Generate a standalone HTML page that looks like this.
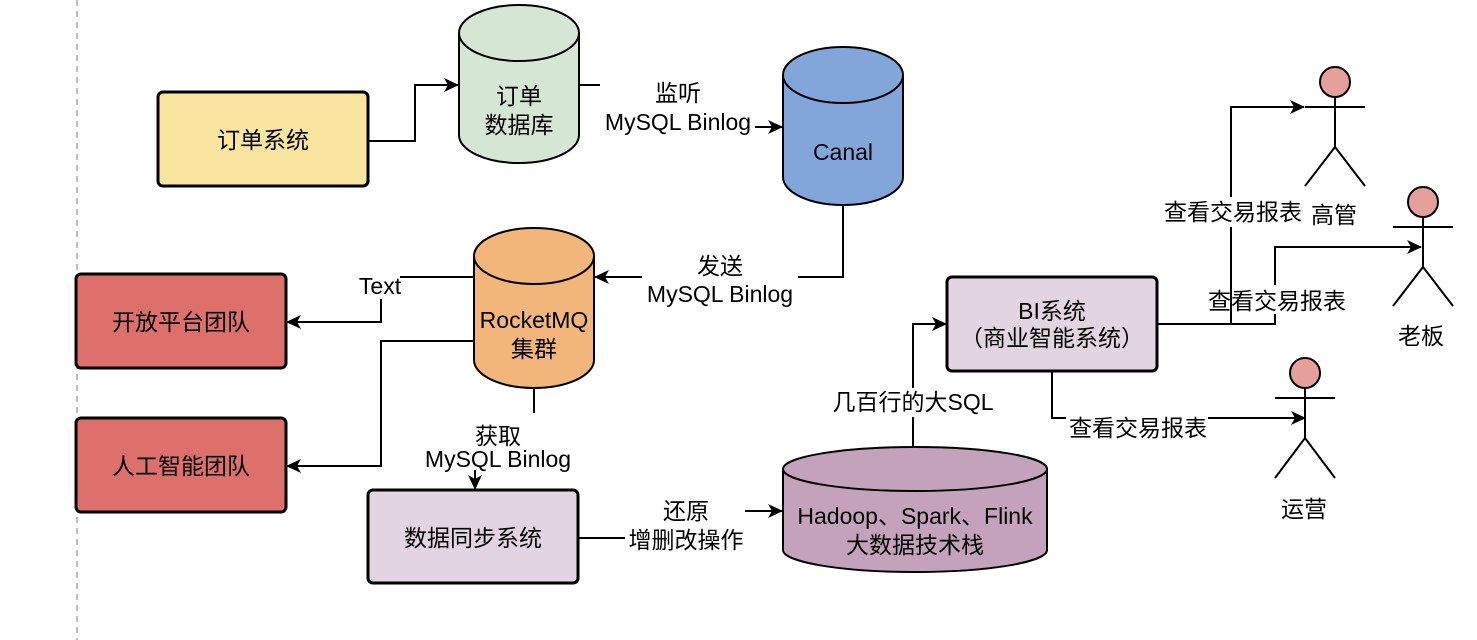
<!DOCTYPE html>
<html><head><meta charset="utf-8"><style>
html,body{margin:0;padding:0;background:#fff;width:1477px;height:640px;overflow:hidden}
text{font-family:"Liberation Sans","Noto Sans CJK SC",sans-serif;font-size:23px;fill:#000;text-anchor:middle}
</style></head><body>
<svg width="1477" height="640" viewBox="0 0 1477 640" xmlns="http://www.w3.org/2000/svg">
<defs><marker id="a" markerWidth="16" markerHeight="14" refX="14" refY="7" orient="auto" markerUnits="userSpaceOnUse"><path d="M0,0 L15,7 L0,14 L4,7 Z" fill="#000"/></marker></defs>
<line x1="77" y1="0" x2="77" y2="640" stroke="#bbb" stroke-width="2" stroke-dasharray="6,5"/>
<g fill="none" stroke="#000" stroke-width="2">
<path d="M368,141 H415 V85 H458" marker-end="url(#a)"/>
<path d="M579,85 H600"/>
<path d="M755,127 H782" marker-end="url(#a)"/>
<path d="M843,205 V277 H798"/>
<path d="M642,277 H595" marker-end="url(#a)"/>
<path d="M474,277 H400"/>
<path d="M381,299 V322 H287" marker-end="url(#a)"/>
<path d="M474,341 H381 V466 H287" marker-end="url(#a)"/>
<path d="M534,388 V413"/>
<path d="M475,470 V489" marker-end="url(#a)"/>
<path d="M578,538 H625"/>
<path d="M745,511 H782" marker-end="url(#a)"/>
<path d="M913,447 V417"/>
<path d="M913,388 V324 H946" marker-end="url(#a)"/>
<path d="M1157,324 H1231 V227"/>
<path d="M1231,197 V107 H1304" marker-end="url(#a)"/>
<path d="M1231,324 H1275 V314"/>
<path d="M1275,285 V247 H1421" marker-end="url(#a)"/>
<path d="M1052,371 V418 H1066"/>
<path d="M1208,418 H1305" marker-end="url(#a)"/>
</g>
<g stroke="#000" stroke-width="3">
<rect x="158" y="92" width="210" height="94" rx="5" fill="#f9e4a0"/>
<rect x="76" y="274" width="210" height="94" rx="5" fill="#de706b"/>
<rect x="76" y="418" width="210" height="94" rx="5" fill="#de706b"/>
<rect x="368" y="490" width="210" height="93" rx="5" fill="#e2d4e0"/>
<rect x="947" y="277" width="210" height="94" rx="5" fill="#e2d4e0"/>
</g>
<g stroke="#000" stroke-width="2">
<path d="M459,33 V135 A60,28 0 0 0 579,135 V33 A60,28 0 0 0 459,33 Z" fill="#d6e6d4"/><path d="M459,33 A60,28 0 0 0 579,33" fill="none"/>
<path d="M783,75 V177 A60,28 0 0 0 903,177 V75 A60,28 0 0 0 783,75 Z" fill="#82a6da"/><path d="M783,75 A60,28 0 0 0 903,75" fill="none"/>
<path d="M474,256 V360 A60,28 0 0 0 594,360 V256 A60,28 0 0 0 474,256 Z" fill="#f3b67a"/><path d="M474,256 A60,28 0 0 0 594,256" fill="none"/>
<path d="M783,469 V550 A132,22 0 0 0 1047,550 V469 A132,22 0 0 0 783,469 Z" fill="#c5a2bb"/><path d="M783,469 A132,22 0 0 0 1047,469" fill="none"/>
<g fill="#e6a09c"><circle cx="1335" cy="82" r="15"/><circle cx="1423" cy="202" r="15"/><circle cx="1305" cy="373" r="15"/></g>
<path d="M1305,107 H1365 M1335,97 V147 L1305,186 M1335,147 L1365,186" fill="none"/>
<path d="M1393,227 H1453 M1423,217 V267 L1393,306 M1423,267 L1453,306" fill="none"/>
<path d="M1275,398 H1335 M1305,388 V438 L1275,478 M1305,438 L1335,478" fill="none"/>
</g>
<text x="263" y="148">订单系统</text>
<text x="519" y="104">订单</text><text x="519" y="133">数据库</text>
<text x="843" y="160">Canal</text>
<text x="534" y="328">RocketMQ</text><text x="534" y="357">集群</text>
<text x="181" y="330">开放平台团队</text>
<text x="181" y="474">人工智能团队</text>
<text x="473" y="546">数据同步系统</text>
<text x="1052" y="319">BI系统</text><text x="1052" y="346">（商业智能系统）</text>
<text x="915" y="524">Hadoop、Spark、Flink</text><text x="915" y="553">大数据技术栈</text>
<text x="678" y="101">监听</text><text x="678" y="130">MySQL Binlog</text>
<text x="720" y="274">发送</text><text x="720" y="302">MySQL Binlog</text>
<text x="380" y="294">Text</text>
<text x="498" y="444">获取</text><text x="498" y="467">MySQL Binlog</text>
<text x="686" y="519">还原</text><text x="686" y="548">增删改操作</text>
<text x="913" y="410">几百行的大SQL</text>
<text x="1233" y="220">查看交易报表</text>
<text x="1277" y="309">查看交易报表</text>
<text x="1138" y="436">查看交易报表</text>
<text x="1334" y="223">高管</text>
<text x="1421" y="344">老板</text>
<text x="1304" y="517">运营</text>
</svg>
</body></html>
